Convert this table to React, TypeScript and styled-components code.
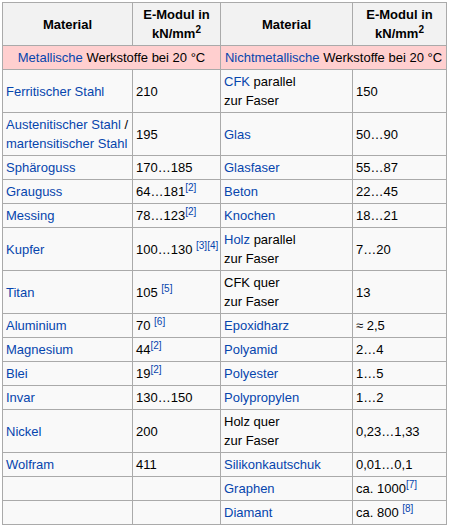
import React from "react";
import styled, { createGlobalStyle } from "styled-components";

const GlobalStyle = createGlobalStyle`
  body {
    margin: 0;
    padding: 2px;
    background: #fff;
    font-family: "Liberation Sans", Arial, sans-serif;
    font-size: 13px;
    color: #000;
  }
`;

const Table = styled.table`
  border-collapse: collapse;
  table-layout: fixed;
  width: 444px;
  background: #f9f9f9;
  border: 1px solid #aaa;
  line-height: 19px;
`;

const Head = styled.th`
  background: #f2f2f2;
  border: 1px solid #aaa;
  padding: 2px 3px;
  text-align: center;
  font-weight: bold;
`;

const Group = styled.td`
  background: #ffcfcf;
  border: 1px solid #aaa;
  padding: 2px 1px;
  text-align: center;
  white-space: nowrap;
`;

// line breaks in cells are explicit, so never wrap
const Cell = styled.td`
  border: 1px solid #aaa;
  padding: 2px 3px;
  vertical-align: middle;
  white-space: nowrap;
`;

const Link = styled.a`
  color: #0645ad;
  text-decoration: none;
`;

const Ref = styled.sup`
  font-size: 10px;
  line-height: 1;
  vertical-align: 5px;
`;

const R = ({ n }: { n: number }) => (
  <Ref>
    <Link href="#">[{n}]</Link>
  </Ref>
);

type Row = [React.ReactNode, React.ReactNode, React.ReactNode, React.ReactNode];

const rows: Row[] = [
  [<Link href="#">Ferritischer Stahl</Link>, "210", <><Link href="#">CFK</Link> parallel<br />zur Faser</>, "150"],
  [<><Link href="#">Austenitischer Stahl</Link> /<br /><Link href="#">martensitischer Stahl</Link></>, "195", <Link href="#">Glas</Link>, "50…90"],
  [<Link href="#">Sphäroguss</Link>, "170…185", <Link href="#">Glasfaser</Link>, "55…87"],
  [<Link href="#">Grauguss</Link>, <>64…181<R n={2} /></>, <Link href="#">Beton</Link>, "22…45"],
  [<Link href="#">Messing</Link>, <>78…123<R n={2} /></>, <Link href="#">Knochen</Link>, "18…21"],
  [<Link href="#">Kupfer</Link>, <>100…130 <R n={3} /><R n={4} /></>, <><Link href="#">Holz</Link> parallel<br />zur Faser</>, "7…20"],
  [<Link href="#">Titan</Link>, <>105 <R n={5} /></>, <>CFK quer<br />zur Faser</>, "13"],
  [<Link href="#">Aluminium</Link>, <>70 <R n={6} /></>, <Link href="#">Epoxidharz</Link>, "≈ 2,5"],
  [<Link href="#">Magnesium</Link>, <>44<R n={2} /></>, <Link href="#">Polyamid</Link>, "2…4"],
  [<Link href="#">Blei</Link>, <>19<R n={2} /></>, <Link href="#">Polyester</Link>, "1…5"],
  [<Link href="#">Invar</Link>, "130…150", <Link href="#">Polypropylen</Link>, "1…2"],
  [<Link href="#">Nickel</Link>, "200", <>Holz quer<br />zur Faser</>, "0,23…1,33"],
  [<Link href="#">Wolfram</Link>, "411", <Link href="#">Silikonkautschuk</Link>, "0,01…0,1"],
  ["", "", <Link href="#">Graphen</Link>, <>ca. 1000<R n={7} /></>],
  ["", "", <Link href="#">Diamant</Link>, <>ca. 800 <R n={8} /></>],
];

function App() {
  return (
    <>
      <GlobalStyle />
      <Table>
        <colgroup>
          <col style={{ width: 130 }} />
          <col style={{ width: 88 }} />
          <col style={{ width: 132 }} />
          <col style={{ width: 94 }} />
        </colgroup>
        <thead>
          <tr>
            <Head>Material</Head>
            <Head>E-Modul in<br />kN/mm<Ref>2</Ref></Head>
            <Head>Material</Head>
            <Head>E-Modul in<br />kN/mm<Ref>2</Ref></Head>
          </tr>
        </thead>
        <tbody>
          <tr>
            <Group colSpan={2}>
              <Link href="#">Metallische</Link> Werkstoffe bei 20 °C
            </Group>
            <Group colSpan={2}>
              <Link href="#">Nichtmetallische</Link> Werkstoffe bei 20 °C
            </Group>
          </tr>
          {rows.map((r, i) => (
            <tr key={i}>
              {r.map((c, j) => (
                <Cell key={j}>{c}</Cell>
              ))}
            </tr>
          ))}
        </tbody>
      </Table>
    </>
  );
}

export default App;
